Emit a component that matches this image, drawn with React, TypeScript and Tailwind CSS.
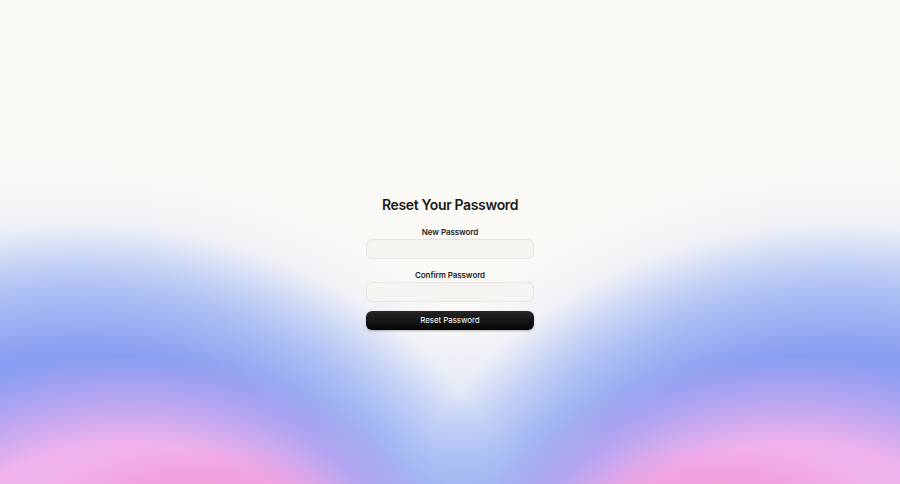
import React from "react";

const bg =
  "bg-[radial-gradient(170px_75px_at_200px_515px,rgba(239,140,204,0.9),rgba(239,140,204,0)),radial-gradient(170px_75px_at_720px_515px,rgba(239,140,204,0.9),rgba(239,140,204,0)),radial-gradient(330px_215px_at_130px_570px,#f2b3ec_0%,#f1b3ec_58%,rgba(200,168,240,0.7)_80%,rgba(200,168,240,0)_100%),radial-gradient(330px_215px_at_790px_570px,#f2b3ec_0%,#f1b3ec_58%,rgba(200,168,240,0.7)_80%,rgba(200,168,240,0)_100%),radial-gradient(470px_400px_at_80px_625px,#889ef0_68%,rgba(150,175,242,0.6)_86%,rgba(150,175,242,0)_100%),radial-gradient(470px_400px_at_840px_625px,#889ef0_68%,rgba(150,175,242,0.6)_86%,rgba(150,175,242,0)_100%),radial-gradient(560px_480px_at_60px_650px,rgba(180,198,246,0.45)_70%,rgba(180,198,246,0)_100%),radial-gradient(560px_480px_at_860px_650px,rgba(180,198,246,0.45)_70%,rgba(180,198,246,0)_100%)] bg-[#faf9f6]";

export default function App() {
  return (
    <div
      className={`w-full h-screen flex flex-col items-center justify-center pt-[40px] ${bg}`}
      style={{ fontFamily: "Inter, 'Liberation Sans', sans-serif" }}
    >
      <div className="w-[168px] flex flex-col items-center">
        <h1 className="text-[14px] leading-[20px] font-semibold text-[#1a1a1a] tracking-[-0.025em] whitespace-nowrap">
          Reset Your Password
        </h1>
        <label className="mt-[11px] text-[8px] leading-[12px] font-semibold text-[#222] tracking-[-0.01em]">
          New Password
        </label>
        <input
          type="password"
          className="mt-px w-full h-5 rounded-md border border-[#e7e5e1] bg-[#f5f4f1] outline-none"
        />
        <label className="mt-2.5 text-[8px] leading-[12px] font-semibold text-[#222] tracking-[-0.01em]">
          Confirm Password
        </label>
        <input
          type="password"
          className="mt-px w-full h-5 rounded-md border border-[#e7e5e1] bg-[#f5f4f1] outline-none"
        />
        <button className="mt-[9px] w-full h-[19px] rounded-md bg-[linear-gradient(#262626,#050505)] text-white text-[8px] leading-[19px] tracking-[-0.01em] shadow-[0_1px_2px_rgba(0,0,0,0.25)]">
          Reset Password
        </button>
      </div>
    </div>
  );
}
